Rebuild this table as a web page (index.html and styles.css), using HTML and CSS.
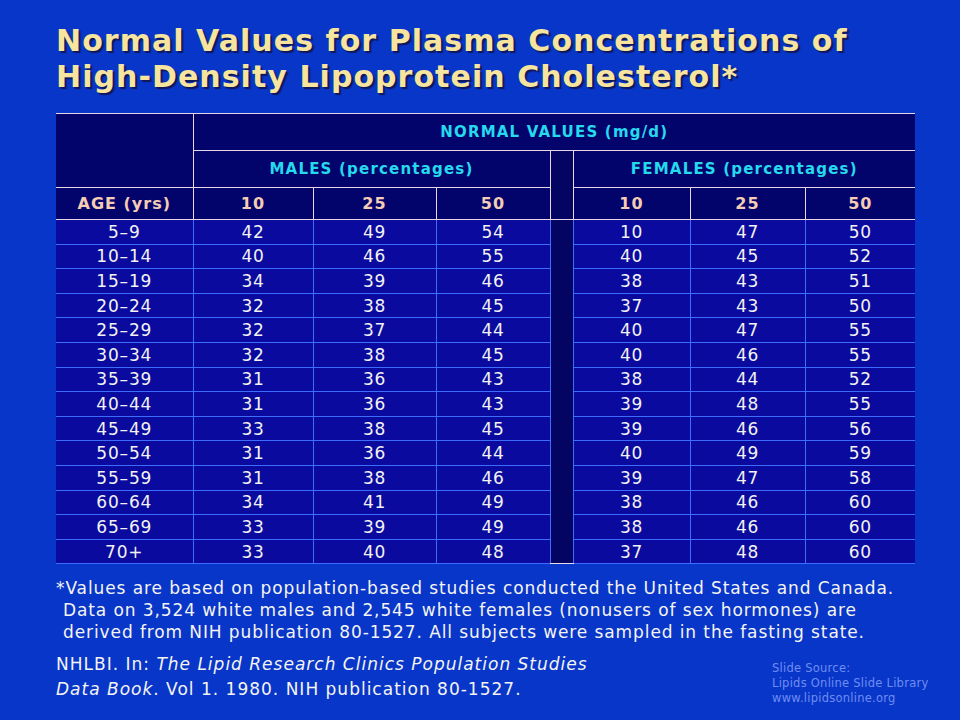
FILE: index.html
```html
<!DOCTYPE html>
<html>
<head>
<meta charset="utf-8">
<link rel="stylesheet" href="styles.css">
</head>
<body>
<div class="slide">
  <h1 class="title">Normal Values for Plasma Concentrations of<br>High-Density Lipoprotein Cholesterol*</h1>
  <table class="hdl">
    <colgroup>
      <col class="c-age"><col class="c-m1"><col class="c-m2"><col class="c-m3"><col class="c-sep"><col class="c-f1"><col class="c-f2"><col class="c-f3">
    </colgroup>
    <thead>
      <tr class="h1">
        <th rowspan="2" class="corner"></th>
        <th colspan="7" class="group">NORMAL VALUES (mg/d)</th>
      </tr>
      <tr class="h2">
        <th colspan="3" class="group">MALES (percentages)</th>
        <th rowspan="2" class="sep"></th>
        <th colspan="3" class="group">FEMALES (percentages)</th>
      </tr>
      <tr class="h3">
        <th class="sub first">AGE (yrs)</th>
        <th class="sub">10</th><th class="sub">25</th><th class="sub">50</th>
        <th class="sub">10</th><th class="sub">25</th><th class="sub last">50</th>
      </tr>
    </thead>
    <tbody>
      <tr><td class="first">5–9</td><td>42</td><td>49</td><td>54</td><td rowspan="14" class="sep"></td><td>10</td><td>47</td><td class="last">50</td></tr>
      <tr><td class="first">10–14</td><td>40</td><td>46</td><td>55</td><td>40</td><td>45</td><td class="last">52</td></tr>
      <tr><td class="first">15–19</td><td>34</td><td>39</td><td>46</td><td>38</td><td>43</td><td class="last">51</td></tr>
      <tr><td class="first">20–24</td><td>32</td><td>38</td><td>45</td><td>37</td><td>43</td><td class="last">50</td></tr>
      <tr><td class="first">25–29</td><td>32</td><td>37</td><td>44</td><td>40</td><td>47</td><td class="last">55</td></tr>
      <tr><td class="first">30–34</td><td>32</td><td>38</td><td>45</td><td>40</td><td>46</td><td class="last">55</td></tr>
      <tr><td class="first">35–39</td><td>31</td><td>36</td><td>43</td><td>38</td><td>44</td><td class="last">52</td></tr>
      <tr><td class="first">40–44</td><td>31</td><td>36</td><td>43</td><td>39</td><td>48</td><td class="last">55</td></tr>
      <tr><td class="first">45–49</td><td>33</td><td>38</td><td>45</td><td>39</td><td>46</td><td class="last">56</td></tr>
      <tr><td class="first">50–54</td><td>31</td><td>36</td><td>44</td><td>40</td><td>49</td><td class="last">59</td></tr>
      <tr><td class="first">55–59</td><td>31</td><td>38</td><td>46</td><td>39</td><td>47</td><td class="last">58</td></tr>
      <tr><td class="first">60–64</td><td>34</td><td>41</td><td>49</td><td>38</td><td>46</td><td class="last">60</td></tr>
      <tr><td class="first">65–69</td><td>33</td><td>39</td><td>49</td><td>38</td><td>46</td><td class="last">60</td></tr>
      <tr><td class="first">70+</td><td>33</td><td>40</td><td>48</td><td>37</td><td>48</td><td class="last">60</td></tr>
    </tbody>
  </table>
  <p class="note">*Values are based on population-based studies conducted the United States and Canada.<br>Data on 3,524 white males and 2,545 white females (nonusers of sex hormones) are<br>derived from NIH publication 80-1527. All subjects were sampled in the fasting state.</p>
  <div class="foot">
    <p class="ref">NHLBI. In: <i>The Lipid Research Clinics Population Studies<br>Data Book</i>. Vol 1. 1980. NIH publication 80-1527.</p>
    <p class="source">Slide Source:<br>Lipids Online Slide Library<br>www.lipidsonline.org</p>
  </div>
</div>
</body>
</html>
```
FILE: styles.css
```css
html, body {
  margin: 0;
  padding: 0;
  background: #0836c8;
}
body {
  width: 960px;
  height: 720px;
  overflow: hidden;
  font-family: "DejaVu Sans", Verdana, sans-serif;
}
.slide {
  padding: 23px 0 0 56px;
}
.title {
  margin: 0 0 18px 0;
  font-size: 30px;
  line-height: 36px;
  font-weight: bold;
  letter-spacing: 1.05px;
  color: #f7e49e;
  text-shadow: 2px 2px 1px #10185a;
}
.hdl {
  width: 859px;
  table-layout: fixed;
  border-collapse: collapse;
  border-top: 1px solid #eadcea;
  border-bottom: 1px solid #eadcea;
}
.c-age { width: 137px; }
.c-m1 { width: 120px; }
.c-m2 { width: 123px; }
.c-m3 { width: 114px; }
.c-sep { width: 23px; }
.c-f1 { width: 117px; }
.c-f2 { width: 115px; }
.c-f3 { width: 110px; }
.hdl th {
  background: #03036c;
  border: 1px solid #e6d6e6;
  padding: 0;
  font-weight: bold;
  text-align: center;
}
.hdl .group {
  color: #26d9ec;
  font-size: 15px;
  letter-spacing: 1.2px;
}
.h1 th { height: 36px; }
.h2 th { height: 36px; }
.h3 th { height: 31px; }
.hdl .corner { border-left: none; }
.hdl .sub {
  color: #f5cdb4;
  font-size: 16px;
  letter-spacing: 1px;
}
.hdl th.sep, .hdl td.sep {
  background: #040463;
}
.hdl td {
  background: #0a0a9e;
  color: #f2f2f2;
  font-size: 17px;
  letter-spacing: 0.8px;
  text-align: center;
  height: 23.6px;
  padding: 0;
  border: 1px solid #3d6cff;
}
.hdl td.sep {
  border-bottom: 1px solid #eadcea;
}
.hdl .first { border-left: none; }
.hdl .last, .hdl .group:last-child { border-right: none; }
.note {
  margin: 13px 0 0 0;
  padding-left: 7px;
  text-indent: -7px;
  color: #f4f4f4;
  font-size: 17px;
  line-height: 22px;
  letter-spacing: 0.9px;
}
.foot {
  display: flex;
  align-items: flex-start;
  margin-top: 9px;
}
.ref {
  margin: 0;
  color: #f4f4f4;
  font-size: 17px;
  line-height: 24.5px;
  letter-spacing: 1px;
  width: 716px;
}
.source {
  margin: 9px 0 0 0;
  color: #6f8df2;
  font-size: 11.5px;
  line-height: 15px;
  letter-spacing: 0.25px;
}
```
